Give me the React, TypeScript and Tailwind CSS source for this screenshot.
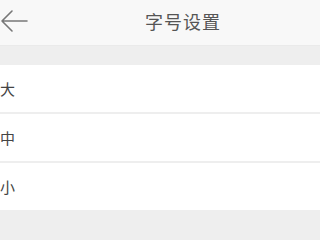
const rows = ["大", "中", "小"];

const App = () => {
  return (
    <div
      className="w-[320px] h-[240px] overflow-hidden bg-[#eeeeee] flex flex-col"
      style={{ fontFamily: '"Noto Sans CJK SC", "Liberation Sans", sans-serif' }}
    >
      {/* Header */}
      <div className="h-[46px] shrink-0 bg-[#f8f8f8] flex items-center border-b border-[#eaeaea]">
        <svg width="28" height="24" viewBox="0 0 28 24" className="shrink-0 mt-[-4px]">
          <path
            d="M27 12 H2 M12 2 L2 12 L12 22"
            fill="none"
            stroke="#777777"
            strokeWidth="1.6"
            strokeLinecap="round"
            strokeLinejoin="round"
          />
        </svg>
        <div className="ml-[117px] text-[18px] tracking-[1px] text-[#555555] leading-none mt-[-3px]">
          字号设置
        </div>
      </div>

      {/* Spacer */}
      <div className="h-[19px] shrink-0" />

      {/* Options */}
      <div className="flex flex-col gap-[2px]">
        {rows.map((r) => (
          <div
            key={r}
            className="h-[47px] bg-white flex items-center pt-[2px] text-[15px] text-[#444444]"
          >
            {r}
          </div>
        ))}
      </div>
    </div>
  );
};

export default App;
